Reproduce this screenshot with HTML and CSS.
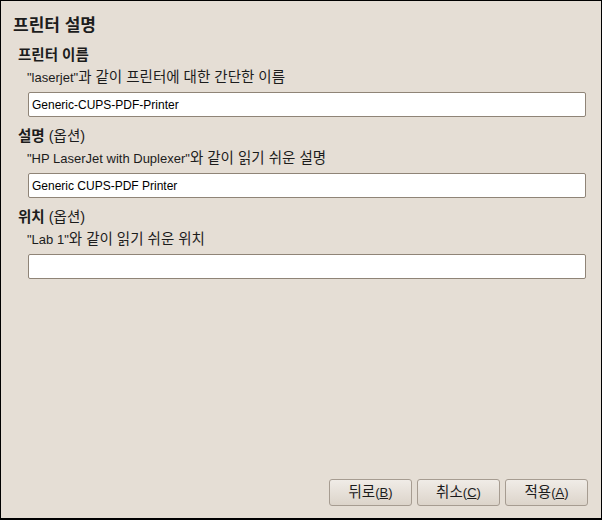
FILE: index.html
```html
<!DOCTYPE html>
<html lang="ko">
<head>
<meta charset="UTF-8">
<title>프린터 설명</title>
<link rel="stylesheet" href="styles.css">
</head>
<body>
<div class="window">
    <h1 class="title">프린터 설명</h1>

    <div class="field">
        <div class="label"><b>프린터 이름</b></div>
        <div class="hint"><span class="en">"laserjet"</span>과 같이 프린터에 대한 간단한 이름</div>
        <input class="entry" value="Generic-CUPS-PDF-Printer">
    </div>

    <div class="field">
        <div class="label"><b>설명</b> (옵션)</div>
        <div class="hint"><span class="en">"HP LaserJet with Duplexer"</span>와 같이 읽기 쉬운 설명</div>
        <input class="entry" value="Generic CUPS-PDF Printer">
    </div>

    <div class="field">
        <div class="label"><b>위치</b> (옵션)</div>
        <div class="hint"><span class="en">"Lab 1"</span>와 같이 읽기 쉬운 위치</div>
        <input class="entry" value="">
    </div>

    <div class="buttons">
        <button class="btn">뒤로<span class="en">(<u>B</u>)</span></button>
        <button class="btn">취소<span class="en">(<u>C</u>)</span></button>
        <button class="btn">적용<span class="en">(<u>A</u>)</span></button>
    </div>
</div>
</body>
</html>
```

FILE: styles.css
```css
html, body {
    margin: 0;
    padding: 0;
}
body {
    font-family: "Liberation Sans", "Noto Sans CJK KR", sans-serif;
    font-size: 14.5px;
    color: #1c1c1c;
}
.en { font-size: 13px; }

.window {
    width: 602px;
    height: 520px;
    box-sizing: border-box;
    border: 1px solid #000;
    border-bottom-width: 2px;
    background: #e5ded5;
    display: flex;
    flex-direction: column;
    padding: 0 13px 0 12px;
}
.title {
    font-size: 17px;
    font-weight: bold;
    margin: 15px 0 0 0;
    line-height: 20px;
    height: 20px;
}
.field {
    padding-left: 5px;
}
.label {
    margin-top: 10px;
    line-height: 18px;
    height: 18px;
}
.field:first-of-type .label { margin-top: 10px; }
.hint {
    margin: 4px 0 0 9px;
    line-height: 18px;
    height: 18px;
}
.entry {
    display: block;
    box-sizing: border-box;
    margin: 6px 0 0 10px;
    width: 558px;
    height: 25px;
    padding: 0 3px;
    border: 1px solid #8f8477;
    border-radius: 2px;
    background: #fff;
    font-family: inherit;
    font-size: 12px;
    color: #000;
}
.buttons {
    margin-top: auto;
    margin-bottom: 12px;
    display: flex;
    justify-content: flex-end;
    gap: 5px;
}
.btn {
    width: 83px;
    height: 27px;
    border: 1px solid #a69c91;
    border-radius: 3px;
    background: linear-gradient(#f0ece7, #dcd4ca);
    font-family: inherit;
    font-size: 14.5px;
    line-height: 18px;
    color: #1c1c1c;
    padding: 0;
}
```
